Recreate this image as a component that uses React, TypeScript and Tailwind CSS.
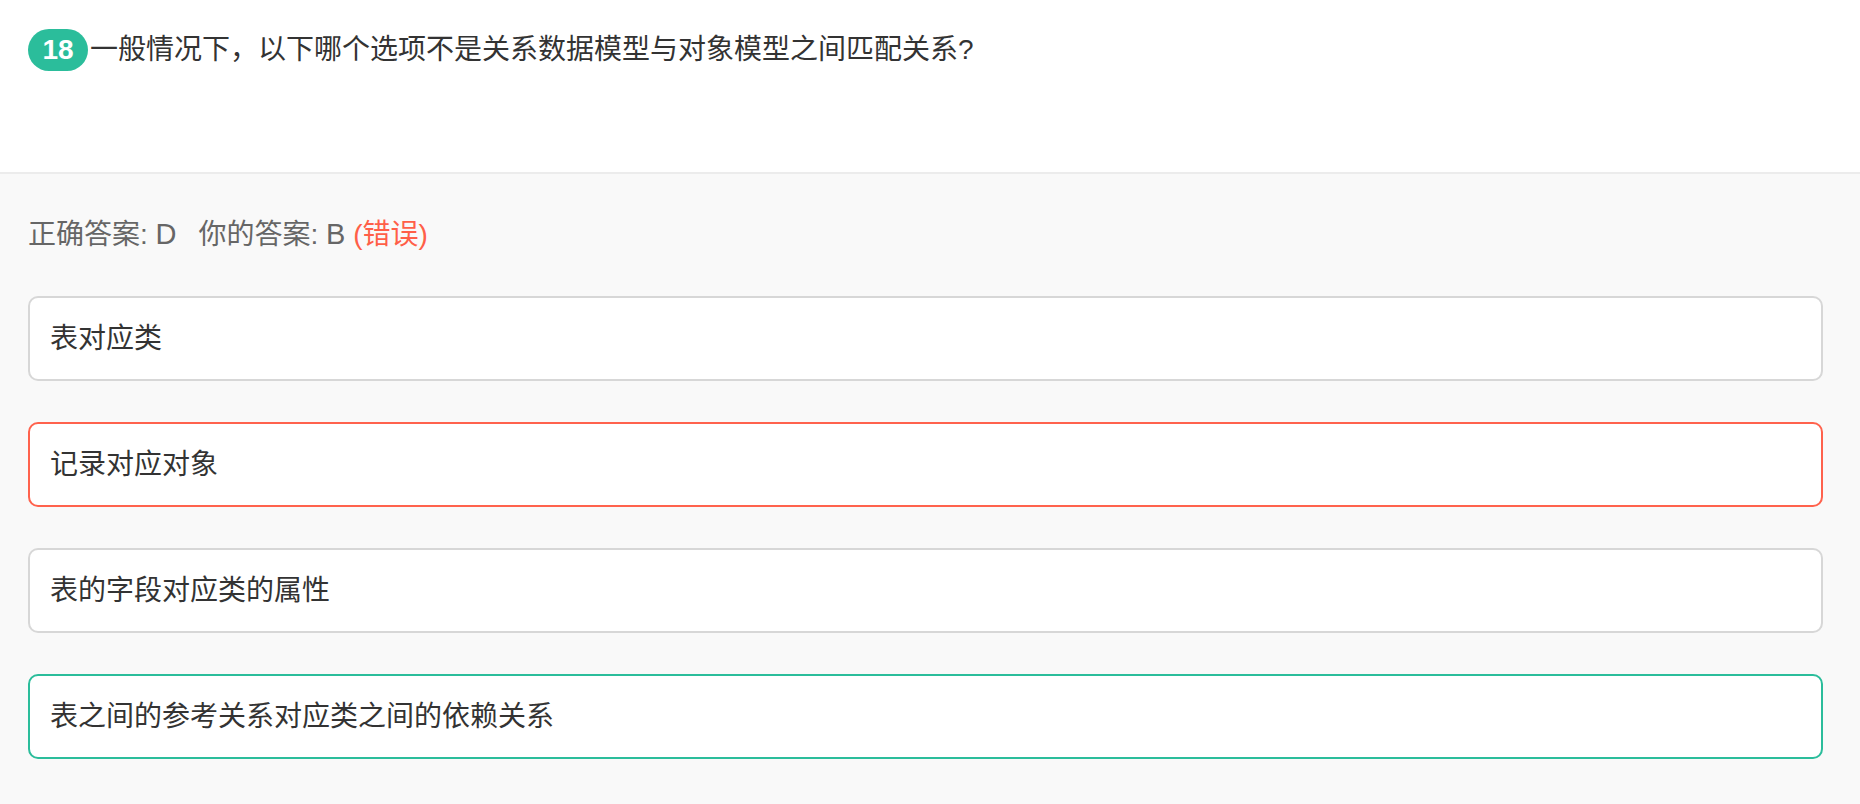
const options = [
  { text: "表对应类", state: "normal" },
  { text: "记录对应对象", state: "wrong" },
  { text: "表的字段对应类的属性", state: "normal" },
  { text: "表之间的参考关系对应类之间的依赖关系", state: "right" },
];

export default function App() {
  return (
    <div
      className="min-h-screen bg-[#f9f9f9] text-[#333]"
      style={{ fontFamily: '"Liberation Sans", "Noto Sans CJK SC", sans-serif' }}
    >
      {/* Question */}
      <div className="h-[174px] bg-white border-b-2 border-[#ececec] pl-[28px] pt-[29px]">
        <div className="flex items-center">
          <span className="flex h-[42px] w-[60px] items-center justify-center rounded-full bg-[#2bbd9b] text-[28px] font-semibold text-white">
            18
          </span>
          <span className="ml-[2px] text-[28px] leading-[40px] text-[#333]">
            一般情况下，以下哪个选项不是关系数据模型与对象模型之间匹配关系?
          </span>
        </div>
      </div>

      {/* Answer */}
      <div className="pl-[28px] pr-[37px] pt-[40px] pb-[46px]">
        <div className="h-[40px] text-[28px] leading-[40px] text-[#666]">
          正确答案: <span className="text-[29px]">D</span>
          <span className="ml-[22px]">你的答案: <span className="text-[29px]">B</span></span>{" "}
          <span className="text-[#ff5f48]">(错误)</span>
        </div>

        <div className="mt-[42px] flex flex-col gap-[41px]">
          {options.map((o) => (
            <div
              key={o.text}
              className={
                "flex h-[85px] items-center rounded-[10px] border-2 bg-white pl-[20px] text-[28px] text-[#333] " +
                (o.state === "wrong"
                  ? "border-[#ff624d]"
                  : o.state === "right"
                  ? "border-[#2bbd9b]"
                  : "border-[#d7d7d7]")
              }
            >
              {o.text}
            </div>
          ))}
        </div>
      </div>
    </div>
  );
}
